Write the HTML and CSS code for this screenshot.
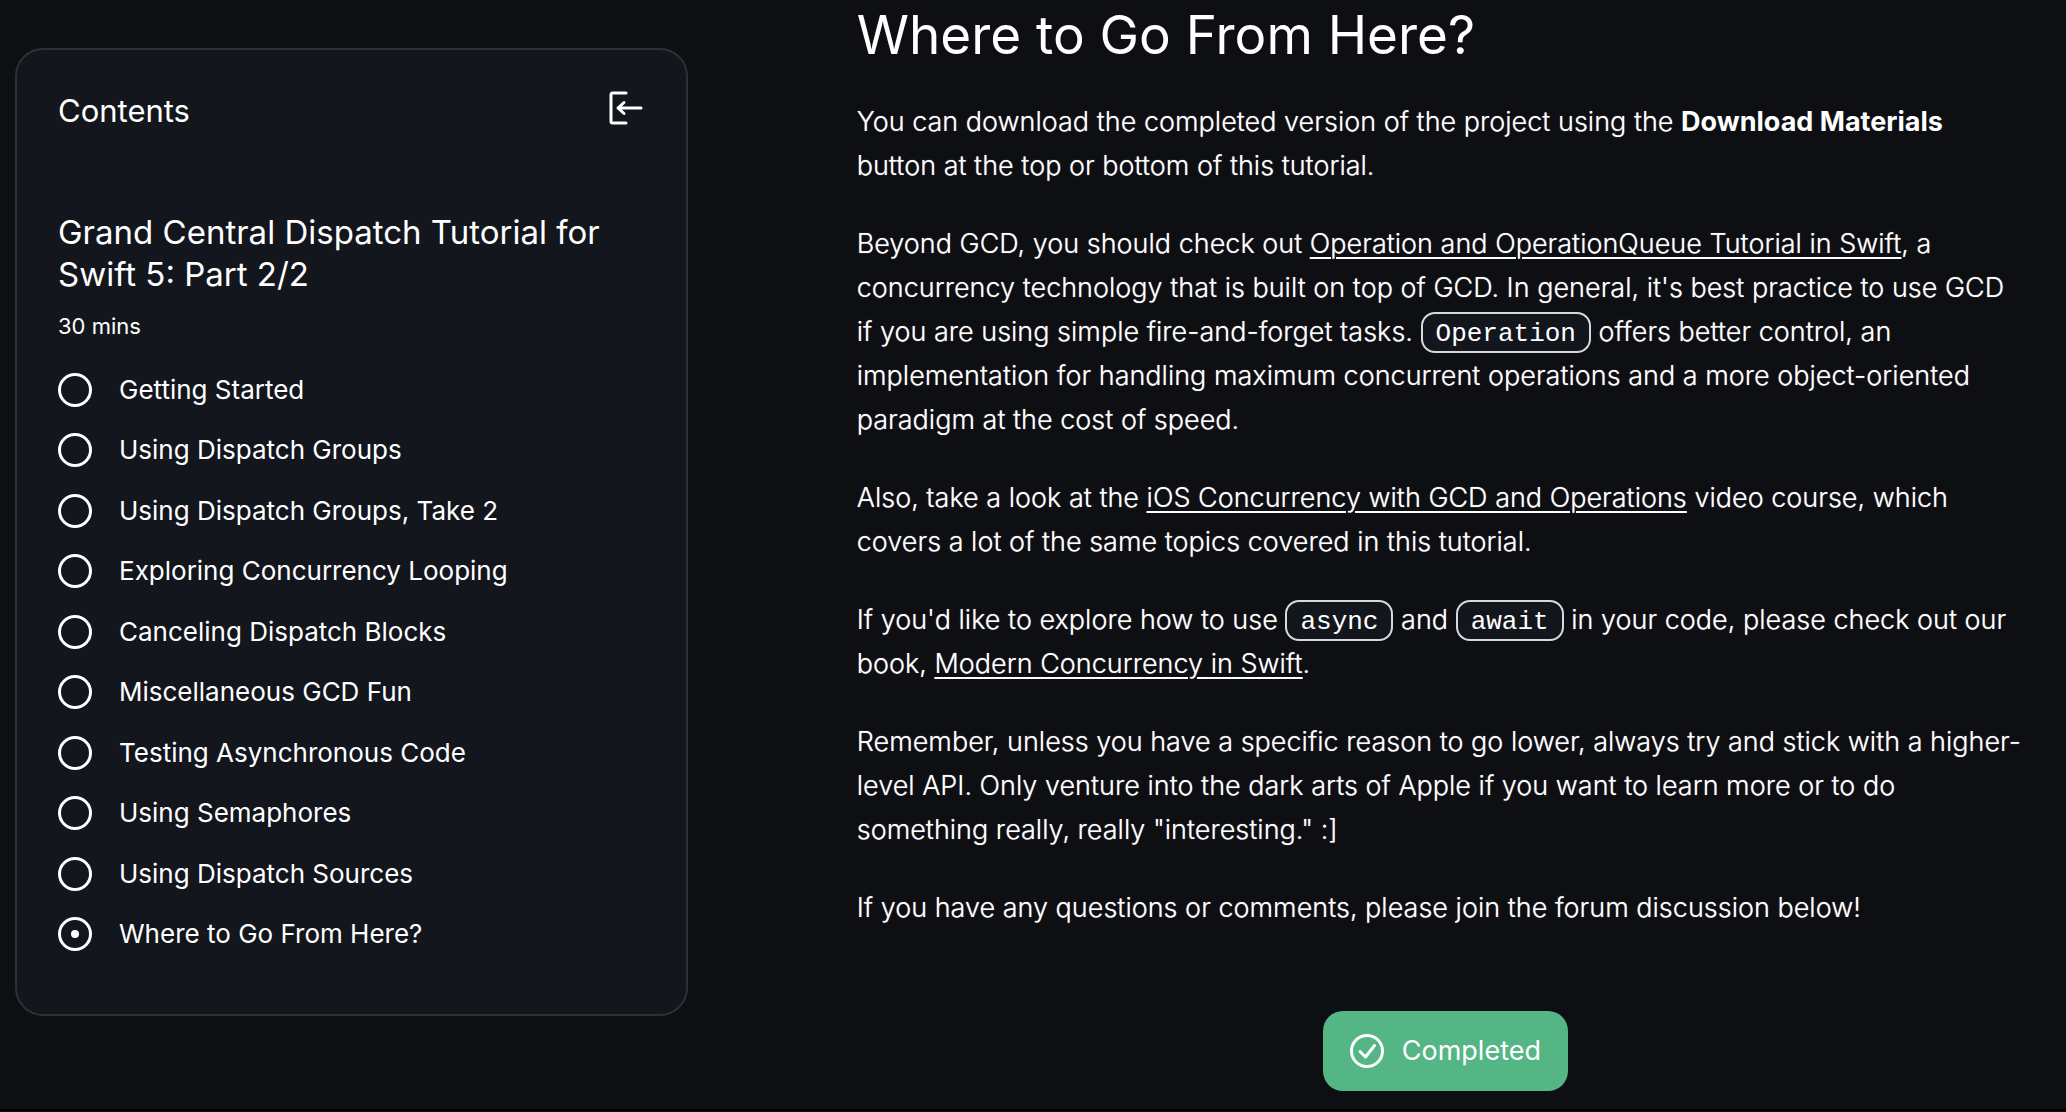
FILE: index.html
```html
<!DOCTYPE html>
<html lang="en">
<head>
<meta charset="utf-8">
<meta name="viewport" content="width=device-width, initial-scale=1">
<title>Grand Central Dispatch Tutorial for Swift 5: Part 2/2</title>
<link rel="stylesheet" href="styles.css">
</head>
<body>
<div class="page">
  <aside class="contents">
    <header class="contents-header">
      <h2 class="contents-label">Contents</h2>
      <button class="collapse" type="button" aria-label="Collapse contents">
        <svg class="collapse-icon" viewBox="0 0 36 36" aria-hidden="true"><path d="M18 3H4.5Q3 3 3 5V31Q3 33 4.500 33H18M33 18H10M16 12.500L10 18L16 23.500"/></svg>
      </button>
    </header>
    <h3 class="contents-title">Grand Central Dispatch Tutorial for Swift 5: Part 2/2</h3>
    <p class="duration">30 mins</p>
    <ul class="sections">
      <li><a class="section" href="#getting-started"><span class="marker"></span>Getting Started</a></li>
      <li><a class="section" href="#groups"><span class="marker"></span>Using Dispatch Groups</a></li>
      <li><a class="section" href="#groups-2"><span class="marker"></span>Using Dispatch Groups, Take 2</a></li>
      <li><a class="section" href="#looping"><span class="marker"></span>Exploring Concurrency Looping</a></li>
      <li><a class="section" href="#canceling"><span class="marker"></span>Canceling Dispatch Blocks</a></li>
      <li><a class="section" href="#misc"><span class="marker"></span>Miscellaneous GCD Fun</a></li>
      <li><a class="section" href="#testing"><span class="marker"></span>Testing Asynchronous Code</a></li>
      <li><a class="section" href="#semaphores"><span class="marker"></span>Using Semaphores</a></li>
      <li><a class="section" href="#sources"><span class="marker"></span>Using Dispatch Sources</a></li>
      <li><a class="section" href="#next" aria-current="true"><span class="marker marker-current"></span>Where to Go From Here?</a></li>
    </ul>
  </aside>
  <main class="article">
    <h1 class="heading" id="next">Where to Go From Here?</h1>
    <p>You can download the completed version of the project using the <strong>Download Materials</strong> button at the top or bottom of this tutorial.</p>
    <p>Beyond GCD, you should check out <a href="#operation">Operation and OperationQueue Tutorial in Swift</a>, a concurrency technology that is built on top of GCD. In general, it's best practice to use GCD if you are using simple fire-and-forget tasks. <code>Operation</code> offers better control, an implementation for handling maximum concurrent operations and a more object-oriented paradigm at the cost of speed.</p>
    <p>Also, take a look at the <a href="#course">iOS Concurrency with GCD and Operations</a> video course, which covers a lot of the same topics covered in this tutorial.</p>
    <p>If you'd like to explore how to use <code>async</code> and <code>await</code> in your code, please check out our book, <a href="#book">Modern Concurrency in Swift</a>.</p>
    <p>Remember, unless you have a specific reason to go lower, always try and stick with a higher-level API. Only venture into the dark arts of Apple if you want to learn more or to do something really, really "interesting." :]</p>
    <p>If you have any questions or comments, please join the forum discussion below!</p>
    <button class="completed" type="button">
      <svg class="completed-icon" viewBox="0 0 34 34" aria-hidden="true"><circle cx="17" cy="17" r="15.500"/><path d="M10 17.500L15.500 23L24.500 11.500"/></svg>
      Completed
    </button>
  </main>
</div>
</body>
</html>
```
FILE: styles.css
```css
* { box-sizing: border-box; }
body {
  margin: 0;
  background: #0e0f13;
  color: #fff;
  font-family: Inter, "Liberation Sans", sans-serif;
  font-size: 26px;
  line-height: 44px;
}
h1, h2, h3, p, ul { margin: 0; padding: 0; font-weight: 400; }
button { border: 0; padding: 0; background: none; color: inherit; font: inherit; cursor: pointer; }

.page {
  display: grid;
  grid-template-columns: minmax(0, 4fr) minmax(0, 7fr);
  column-gap: 169px;
  align-items: start;
  padding: 0 32px 18px 15px;
  border-bottom: 2px solid #000;
}

.contents {
  margin-top: 48px;
  padding: 40px 41px;
  border: 2px solid #2d3136;
  border-radius: 28px;
  background: #14161e;
}
.contents-header { display: flex; justify-content: space-between; align-items: flex-start; }
.contents-label { font-size: 31px; line-height: 42px; }
.collapse { display: flex; padding-right: 1px; }
.collapse-icon { width: 36px; height: 36px; fill: none; stroke: #fff; stroke-width: 3; stroke-linecap: round; stroke-linejoin: round; }
.contents-title { margin-top: 79px; font-size: 33px; line-height: 42px; }
.duration { margin-top: 13px; font-size: 22px; line-height: 36px; }
.sections {
  display: flex;
  flex-direction: column;
  justify-content: space-between;
  min-height: 604px;
  margin: 16px 0 10px;
  list-style: none;
}
.section { display: flex; align-items: center; gap: 27px; min-height: 60px; color: inherit; text-decoration: none; }
.marker { display: flex; align-items: center; justify-content: center; flex: none; width: 34px; height: 34px; border: 3px solid #fff; border-radius: 50%; }
.marker-current::after { content: ""; width: 8px; height: 8px; border-radius: 50%; background: #fff; }

.article { display: flex; flex-direction: column; }
.article p { margin-bottom: 34px; padding-right: 10px; font-size: 27px; font-weight: 300; text-shadow: 0 0 1px rgba(255, 255, 255, 0.6); }
.article strong { font-weight: 700; text-shadow: none; }
.article a { color: inherit; text-decoration-thickness: 2px; text-underline-offset: 4px; }
.heading { margin: 2px 0 32px; font-size: 53px; line-height: 66px; }
.article code {
  padding: 5px 13px 2px;
  border: 2px solid #d8d9da;
  border-radius: 14px;
  background: #14161e;
  font-family: "Liberation Mono", monospace;
  font-size: 26px;
  line-height: 26px;
  text-shadow: none;
}
.completed {
  display: flex;
  align-items: center;
  align-self: center;
  gap: 18px;
  margin-top: 47px;
  padding: 18px 27px;
  border-radius: 20px;
  background: #55b685;
  font-size: 27px;
}
.completed-icon { width: 34px; height: 34px; fill: none; stroke: #fff; stroke-width: 3; stroke-linecap: round; stroke-linejoin: round; }
```
